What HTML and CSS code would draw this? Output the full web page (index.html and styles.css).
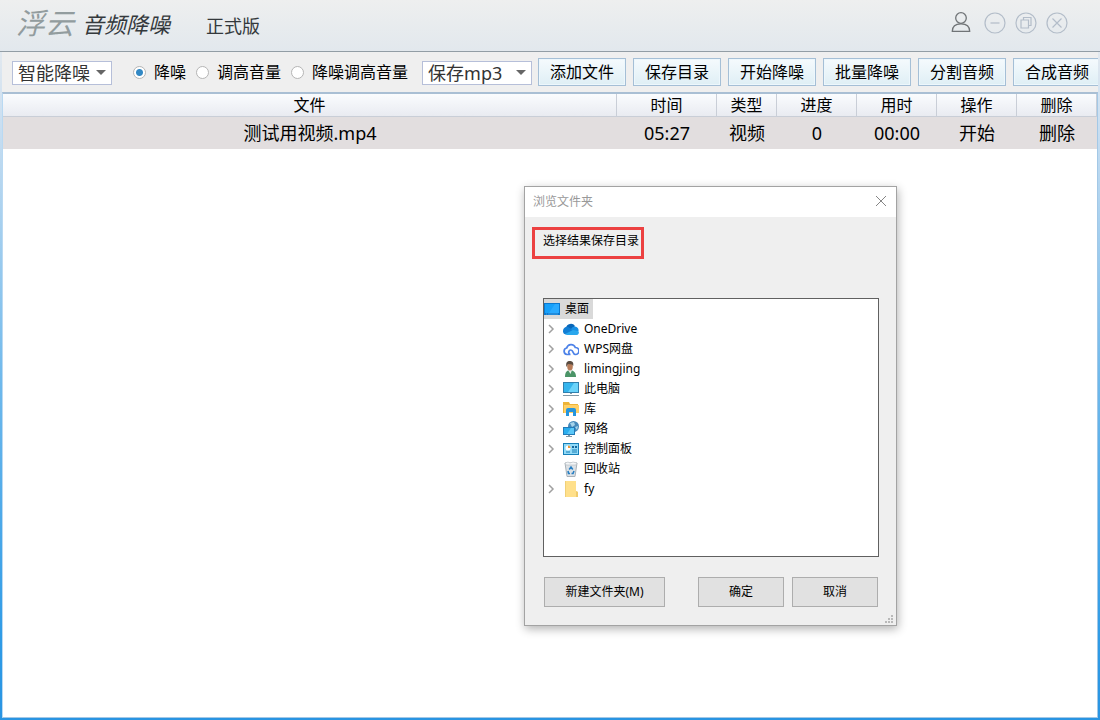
FILE: index.html
```html
<!DOCTYPE html>
<html lang="zh-CN">
<head>
<meta charset="utf-8">
<meta name="viewport" content="width=device-width, initial-scale=1">
<title>浮云音频降噪</title>
<link rel="stylesheet" href="styles.css">
</head>
<body>
<div class="window">
  <header class="titlebar">
    <span class="brand">浮云</span>
    <h1 class="product">音频降噪</h1>
    <span class="edition">正式版</span>
    <div class="window-controls">
      <button type="button" aria-label="用户">
        <svg width="22" height="22" viewBox="0 0 22 22" fill="none" stroke="#707477" stroke-width="1.3"><circle cx="11" cy="6" r="5.3"/><path d="M2.300 19.300c0-5 3.500-7.500 8.700-7.500s8.700 2.500 8.700 7.500z"/></svg>
      </button>
      <button type="button" aria-label="最小化">
        <svg width="22" height="22" viewBox="0 0 22 22" fill="none" stroke="#b3bdc9" stroke-width="1.2"><circle cx="11" cy="11" r="10"/><path d="M6.500 11h9"/></svg>
      </button>
      <button type="button" aria-label="还原">
        <svg width="22" height="22" viewBox="0 0 22 22" fill="none" stroke="#b3bdc9" stroke-width="1.2"><circle cx="11" cy="11" r="10"/><path d="M6 8h7.500v8H6zM8.500 8V5.500H16v8h-2.500"/></svg>
      </button>
      <button type="button" aria-label="关闭">
        <svg width="22" height="22" viewBox="0 0 22 22" fill="none" stroke="#b3bdc9" stroke-width="1.2"><circle cx="11" cy="11" r="10"/><path d="M6.500 6.500l9 9M15.500 6.500l-9 9"/></svg>
      </button>
    </div>
  </header>

  <div class="toolbar">
    <span class="dropdown dropdown-mode">
      <select aria-label="模式"><option>智能降噪</option></select>
    </span>
    <div class="choices">
      <label><input type="radio" name="task" checked>降噪</label>
      <label><input type="radio" name="task">调高音量</label>
      <label><input type="radio" name="task">降噪调高音量</label>
    </div>
    <span class="dropdown dropdown-format">
      <select aria-label="保存格式"><option>保存mp3</option></select>
    </span>
    <div class="actions">
      <button type="button">添加文件</button>
      <button type="button">保存目录</button>
      <button type="button">开始降噪</button>
      <button type="button">批量降噪</button>
      <button type="button">分割音频</button>
      <button type="button">合成音频</button>
    </div>
  </div>

  <main class="content">
    <table class="files">
      <colgroup><col><col class="col-time"><col class="col-type"><col class="col-cell"><col class="col-cell"><col class="col-cell"><col class="col-cell"></colgroup>
      <thead>
        <tr><th>文件</th><th>时间</th><th>类型</th><th>进度</th><th>用时</th><th>操作</th><th>删除</th></tr>
      </thead>
      <tbody>
        <tr><td>测试用视频.mp4</td><td>05:27</td><td>视频</td><td>0</td><td>00:00</td><td>开始</td><td>删除</td></tr>
      </tbody>
    </table>
  </main>
</div>

<section class="dialog" role="dialog" aria-labelledby="dialog-title">
  <div class="dialog-title">
    <h2 id="dialog-title">浏览文件夹</h2>
    <button type="button" aria-label="关闭">
      <svg width="12" height="12" viewBox="0 0 12 12" fill="none" stroke="#858585"><path d="M1 1l10 10M11 1L1 11"/></svg>
    </button>
  </div>
  <div class="dialog-body">
    <p class="prompt">选择结果保存目录</p>
    <ul class="tree">
      <li class="root">
        <svg width="16" height="16" viewBox="0 0 16 16"><path d="M0 2h16v12H0z" fill="#0a78cf"/><path d="M1 3h14v9H1z" fill="#16a0fa"/><path d="M11 3h4v9H5z" fill="#2aaaff"/><path d="M2 13h1m1 0h10" stroke="#5db8f8" stroke-width=".6"/></svg>
        <span>桌面</span>
      </li>
      <li>
        <svg class="chevron" width="8" height="10" viewBox="0 0 8 10"><path d="M2 1l4 4-4 4"/></svg>
        <svg width="16" height="16" viewBox="0 0 16 16"><path d="M3 7a5 5 0 0 1 9-2l-5 6z" fill="#0967b9"/><path d="M0 10a4 4 0 0 1 5-4l7 4-9 3.500A3.200 3.200 0 0 1 0 10z" fill="#127ed4"/><path d="M8 8a4 4 0 0 1 4-2.500 3.800 3.800 0 0 1 3.500 4.500l-4 2z" fill="#1990e4"/><path d="M2 13l8-4 5.500 1.200A2.500 2.500 0 0 1 13.500 14H4z" fill="#29a7ed"/></svg>
        <span>OneDrive</span>
      </li>
      <li>
        <svg class="chevron" width="8" height="10" viewBox="0 0 8 10"><path d="M2 1l4 4-4 4"/></svg>
        <svg width="16" height="16" viewBox="0 0 16 16" fill="none" stroke="#4d82e8" stroke-width="1.700"><path d="M7.500 13.500H4a3.300 3.300 0 0 1-.3-6.500A4.500 4.500 0 0 1 12.300 6.500a3.500 3.500 0 0 1 .2 7C9.500 13.500 10.500 9 8 9a2.200 2.200 0 0 0-1 4.200"/></svg>
        <span>WPS网盘</span>
      </li>
      <li>
        <svg class="chevron" width="8" height="10" viewBox="0 0 8 10"><path d="M2 1l4 4-4 4"/></svg>
        <svg width="16" height="16" viewBox="0 0 16 16"><path d="M2 16c0-5 2-7 5-7s6 2 6 7z" fill="#4b9467"/><path d="M5 9l2.500 4L9 9z" fill="#e6eee9"/><ellipse cx="7" cy="5.500" rx="2.800" ry="4" fill="#b77c59"/><path d="M3.500 6C2.500 2 4 0 6.500 0S11 1 10.200 5L9 3.500 5 3z" fill="#594b40"/></svg>
        <span>limingjing</span>
      </li>
      <li>
        <svg class="chevron" width="8" height="10" viewBox="0 0 8 10"><path d="M2 1l4 4-4 4"/></svg>
        <svg width="16" height="16" viewBox="0 0 16 16"><path d="M0 1h16v11H0z" fill="#307fad"/><path d="M1 2h14v9H1z" fill="#35b5ed"/><path d="M11 2h4v9H5z" fill="#6bd3fa"/><path d="M7 12h2v1H7zM0 14h16v1H0z" fill="#8298a5"/></svg>
        <span>此电脑</span>
      </li>
      <li>
        <svg class="chevron" width="8" height="10" viewBox="0 0 8 10"><path d="M2 1l4 4-4 4"/></svg>
        <svg width="16" height="16" viewBox="0 0 16 16"><path d="M0 1h6l1 2h8v9H0z" fill="#eeb438"/><path d="M1 4h15v8H1z" fill="#ffd067"/><path d="M3 15V9q0-2 2-2h6q2 0 2 2v6h-3v-4H6v4z" fill="#2695dd"/></svg>
        <span>库</span>
      </li>
      <li>
        <svg class="chevron" width="8" height="10" viewBox="0 0 8 10"><path d="M2 1l4 4-4 4"/></svg>
        <svg width="16" height="16" viewBox="0 0 16 16"><circle cx="10.500" cy="5.500" r="5.500" fill="#4689ba"/><path d="M7 2l4-1 1 3-3 2zM12 6l3-1-1 4z" fill="#a5d3eb"/><path d="M0 6h12v8H0z" fill="#227bb8"/><path d="M1 7h10v6H1z" fill="#2caeee"/><path d="M8 7h3v6H4z" fill="#5bc7f7"/><path d="M5 14h2v1h2v1H3v-1h2z" fill="#8298a5"/></svg>
        <span>网络</span>
      </li>
      <li>
        <svg class="chevron" width="8" height="10" viewBox="0 0 8 10"><path d="M2 1l4 4-4 4"/></svg>
        <svg width="16" height="16" viewBox="0 0 16 16"><path d="M0 2h16v12H0z" fill="#1680b9"/><path d="M1 3h14v10H1z" fill="#91daf7"/><circle cx="5" cy="7" r="2.500" fill="#fff"/><path d="M5 4.500V7h2.500A2.500 2.500 0 0 0 5 4.500z" fill="#ed9835"/><path d="M9 5h2v2H9zM12 5h2v2h-2z" fill="#15669c"/><path d="M3 11h4M9 9h5M9 11h5" stroke="#1b7eb5"/></svg>
        <span>控制面板</span>
      </li>
      <li>
        <span class="chevron"></span>
        <svg width="16" height="16" viewBox="0 0 16 16"><path d="M2 2h12l-2 13.500H4z" fill="#dce1e5" stroke="#a9b1b8"/><path d="M2 2l3-1 2 1 3-1 4 1-1 2H3z" fill="#f4f6f7" stroke="#b4bbc0" stroke-width=".6"/><path d="M6.200 8.500L8 6l1.800 2.500M11 10l-1 2.500H8.500M7 12.500H5.500L5 10" fill="none" stroke="#277fc4" stroke-width="1.600"/></svg>
        <span>回收站</span>
      </li>
      <li>
        <svg class="chevron" width="8" height="10" viewBox="0 0 8 10"><path d="M2 1l4 4-4 4"/></svg>
        <svg width="16" height="16" viewBox="0 0 16 16"><path d="M2 0h11v10l2 1v5H2z" fill="#ffe08b"/><path d="M13 10l2 1v5h-2z" fill="#efcb6c"/><path d="M2.500 0v16" stroke="#f0d078"/></svg>
        <span>fy</span>
      </li>
    </ul>
    <div class="dialog-buttons">
      <button type="button" class="new-folder">新建文件夹(M)</button>
      <button type="button">确定</button>
      <button type="button">取消</button>
    </div>
  </div>
  <svg class="grip" width="8" height="8" viewBox="0 0 8 8" fill="#b9b9b9"><path d="M6 0h2v2H6zM3 3h2v2H3zM6 3h2v2H6zM0 6h2v2H0zM3 6h2v2H3zM6 6h2v2H6z"/></svg>
</section>
</body>
</html>
```
FILE: styles.css
```css
* { box-sizing: border-box; }

body {
  margin: 0;
  color: #000;
  font-family: "Noto Sans", "Noto Sans CJK SC", sans-serif;
  font-size: 16px;
}

button, select, input { font: inherit; color: inherit; margin: 0; }

.window {
  display: flex;
  flex-direction: column;
  min-height: 100vh;
  padding: 0 2px 2px;
  background: linear-gradient(#eeeff1 0, #e3e9ef 50px, #cbdff1 120px, #6fb9ec 380px, #2f9be6 640px, #2994e2 100%);
}

.titlebar {
  display: flex;
  align-items: center;
  height: 52px;
  margin: 0 -2px;
  padding: 0 32px 6px 16px;
  background: linear-gradient(#eeefef, #e2e8ed);
  border-bottom: 1px solid #929da5;
}

.brand {
  color: #929c9e;
  font-size: 29px;
  font-style: italic;
  line-height: 40px;
}

.product {
  margin: 2px 0 0 8px;
  color: #34393c;
  font-size: 22px;
  font-style: italic;
  font-weight: 400;
  line-height: 32px;
}

.edition {
  margin: 6px 0 0 36px;
  color: #34393c;
  font-size: 18px;
  line-height: 28px;
}

.window-controls {
  display: flex;
  gap: 9px;
  margin-left: auto;
}

.window-controls button {
  display: flex;
  padding: 0;
  border: 0;
  background: none;
}

.window-controls button:first-child { margin-right: 3px; }

.toolbar {
  display: flex;
  align-items: center;
  height: 40px;
  padding-left: 10px;
  overflow: hidden;
  background: #efefef;
}

.dropdown {
  position: relative;
  flex: none;
  height: 24px;
  margin-top: 2px;
}

.dropdown::after {
  content: "";
  position: absolute;
  top: 9px;
  right: 6px;
  border: 5px solid transparent;
  border-top-color: #666;
  border-bottom: 0;
  pointer-events: none;
}

.dropdown-mode { width: 100px; }
.dropdown-format { width: 110px; margin-left: 14px; }

.dropdown select {
  appearance: none;
  display: block;
  width: 100%;
  height: 100%;
  padding: 0 5px;
  border: 1px solid #b6bfd9;
  border-radius: 0;
  background: #fff;
  color: #333;
  font-size: 18px;
  line-height: 22px;
}

.choices {
  display: flex;
  gap: 10px;
  margin-left: 21px;
}

.choices label {
  display: flex;
  align-items: center;
  gap: 8px;
  white-space: nowrap;
  line-height: 24px;
}

.choices input {
  appearance: none;
  width: 13px;
  height: 13px;
  border: 1px solid #b5b5b5;
  border-radius: 50%;
  background: #fff;
}

.choices input:checked {
  background: radial-gradient(circle, #3288c4 3px, #fff 4px);
}

.actions {
  display: flex;
  gap: 7px;
  margin-left: 6px;
}

.actions button {
  flex: none;
  width: 88px;
  height: 28px;
  padding: 0;
  border: 1px solid #a5bfd6;
  background: linear-gradient(#f5fafd, #dfeff5);
  box-shadow: inset 0 0 0 1px #edf7fc;
  line-height: 24px;
}

.content {
  flex: 1;
  border: 1px solid #a4c8e6;
  border-top: 2px solid #a9bfd4;
  border-left-color: #b9d9f2;
  background: #fff;
}

.files {
  width: 100%;
  border-collapse: separate;
  border-spacing: 0;
  table-layout: fixed;
  text-align: center;
}

.col-time { width: 100px; }
.col-type { width: 60px; }
.col-cell { width: 80px; }

.files th {
  height: 23px;
  padding: 0;
  border-right: 1px solid #c9ced7;
  border-bottom: 1px solid #c9ced7;
  background: linear-gradient(#fafcfe, #e9ebf1);
  font-weight: 400;
  line-height: 22px;
}

.files td {
  height: 32px;
  padding: 0;
  background: #e2dedf;
  font-size: 18px;
  line-height: 32px;
}

.dialog {
  position: absolute;
  top: 186px;
  left: 524px;
  width: 373px;
  border: 1px solid #a3a3a3;
  background: #efefef;
  box-shadow: 1px 3px 9px rgba(0, 0, 0, .3);
  font-size: 12px;
}

.dialog-title {
  display: flex;
  align-items: center;
  justify-content: space-between;
  height: 30px;
  padding: 0 9px 2px 8px;
  background: #fff;
}

.dialog-title h2 {
  margin: 0;
  color: #999;
  font-size: 12px;
  font-weight: 400;
}

.dialog-title button {
  display: flex;
  padding: 0;
  border: 0;
  background: none;
}

.dialog-body { padding: 10px 17px 18px 7px; }

.prompt {
  width: 112px;
  height: 32px;
  margin: 0 0 39px;
  padding-left: 8px;
  border: 3px solid #ec4141;
  line-height: 22px;
  white-space: nowrap;
}

.tree {
  height: 259px;
  margin: 0 0 20px 11px;
  padding: 0;
  border: 1px solid #606060;
  background: #fff;
  list-style: none;
}

.tree li {
  display: flex;
  align-items: center;
  height: 20px;
  padding-left: 3px;
  line-height: 20px;
}

.tree li > span:last-child { margin-left: 5px; }

.tree .root {
  width: 49px;
  padding-left: 0;
  background: #d9d9d9;
}

.chevron {
  flex: none;
  width: 8px;
  margin-right: 8px;
  fill: none;
  stroke: #a0a0a0;
  stroke-width: 1.5;
}

.dialog-buttons {
  display: flex;
  gap: 8px;
  padding: 0 1px 0 12px;
}

.dialog-buttons button {
  width: 86px;
  height: 30px;
  padding: 0 0 2px;
  border: 1px solid #adadad;
  background: #e1e1e1;
}

.dialog-buttons .new-folder {
  width: 121px;
  margin-right: auto;
}

.grip {
  position: absolute;
  right: 3px;
  bottom: 2px;
}
```
